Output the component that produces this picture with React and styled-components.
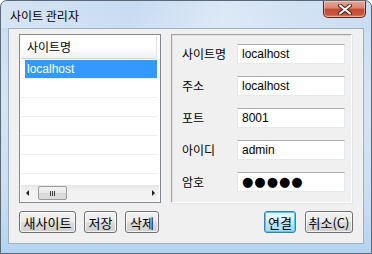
import React from 'react'
import styled, { createGlobalStyle, css } from 'styled-components'

const Global = createGlobalStyle`
  html, body { margin: 0; padding: 0; background: #ffffff; }
  body {
    font-family: "Liberation Sans", "Noto Sans CJK KR", sans-serif;
    font-size: 12px;
    color: #000;
  }
`

const Window = styled.div`
  width: 372px;
  height: 254px;
  box-sizing: border-box;
  border: 1px solid #5b6878;
  border-radius: 7px 7px 0 0;
  background: linear-gradient(180deg, #c7dbf1 0%, #d6e5f5 40%, #c9ddf2 80%, #b4d3f0 100%);
  display: flex;
  flex-direction: column;
  padding: 0 7px 9px 7px;
  overflow: hidden;
`

const TitleBar = styled.div`
  height: 27px;
  display: flex;
  align-items: flex-start;
  justify-content: space-between;
  background: linear-gradient(100deg, rgba(255,255,255,0.25) 0%, rgba(255,255,255,0) 35%, rgba(255,255,255,0.35) 60%, rgba(255,255,255,0) 100%);
  margin: 0 -7px;
  padding: 0 5px 0 9px;
`

const Title = styled.div`
  font-family: "Noto Sans CJK KR", sans-serif;
  font-size: 12px;
  line-height: 14px;
  margin-top: 8px;
  color: #000;
`

const CloseButton = styled.div`
  width: 43px;
  height: 17px;
  box-sizing: border-box;
  border: 1px solid #6b2214;
  border-top: none;
  border-radius: 0 0 5px 5px;
  background: linear-gradient(180deg, #e6a898 0%, #d98470 45%, #c14a32 50%, #c9563c 85%, #e08f6c 100%);
  display: flex;
  align-items: center;
  justify-content: center;
  box-shadow: inset 0 0 0 1px rgba(255,255,255,0.35);
`

const Content = styled.div`
  flex: 1;
  background: #f0f0f0;
  border: 1px solid #9fb0c3;
  box-sizing: border-box;
  padding: 5px 10px 0 10px;
  display: flex;
  flex-direction: column;
`

const MainRow = styled.div`
  display: flex;
  gap: 10px;
  height: 169px;
`

const ListBox = styled.div`
  width: 142px;
  box-sizing: border-box;
  border: 1px solid #828790;
  background: #fff;
  display: flex;
  flex-direction: column;
  padding: 1px;
`

const ListHeader = styled.div`
  height: 23px;
  box-sizing: border-box;
  background: linear-gradient(180deg, #ffffff 0%, #ffffff 50%, #f1f2f4 100%);
  border-bottom: 1px solid #d5d5d5;
  border-right: 1px solid #e3e4e6;
  font-family: "Noto Sans CJK KR", sans-serif;
  line-height: 22px;
  padding-left: 6px;
  margin-right: 2px;
`

const ListRows = styled.div`
  flex: 1;
  overflow: hidden;
  padding-top: 1px;
`

const ListRow = styled.div`
  height: 19px;
  box-sizing: border-box;
  border-bottom: 1px solid #eeeeee;
  margin-right: 2px;
  ${p => p.$selected && css`
    & > span {
      background: #3399ff;
      color: #fff;
    }
  `}
`

const RowText = styled.span`
  display: block;
  height: 18px;
  line-height: 18px;
  margin-left: 4px;
  padding-left: 2px;
  font-size: 12px;
`

const HScroll = styled.div`
  height: 16px;
  display: flex;
  align-items: center;
  background: linear-gradient(180deg, #e6e6e6 0%, #f2f2f2 40%, #f2f2f2 100%);
  padding: 0 4px 0 5px;
`

const Arrow = styled.div`
  width: 0;
  height: 0;
  border-top: 3px solid transparent;
  border-bottom: 3px solid transparent;
  ${p => p.$dir === 'left'
    ? css`border-right: 3px solid #202020;`
    : css`border-left: 3px solid #202020;`}
`

const Thumb = styled.div`
  width: 29px;
  height: 14px;
  box-sizing: border-box;
  margin-left: 9px;
  border: 1px solid #9a9a9a;
  border-radius: 2px;
  background: linear-gradient(180deg, #f4f4f4 0%, #e6e6e6 50%, #d8d8d8 51%, #dcdcdc 100%);
  display: flex;
  align-items: center;
  justify-content: center;
  gap: 1px;
`

const Grip = styled.div`
  width: 1px;
  height: 5px;
  background: #404040;
`

const Spacer = styled.div`
  flex: 1;
`

const Panel = styled.div`
  width: 181px;
  box-sizing: border-box;
  border: 1px solid #fff;
  border-top-color: #a0a0a0;
  border-left-color: #a0a0a0;
  box-shadow: inset 1px 1px 0 #e3e3e3, 1px 1px 0 #e3e3e3;
  padding: 9px 6px 0 10px;
  display: flex;
  flex-direction: column;
  gap: 12px;
`

const Field = styled.div`
  display: flex;
  align-items: center;
  height: 20px;
`

const Label = styled.div`
  width: 55px;
  font-family: "Noto Sans CJK KR", sans-serif;
  font-size: 12px;
  line-height: 14px;
`

const Input = styled.div`
  width: 108px;
  height: 20px;
  box-sizing: border-box;
  border: 1px solid #e3e9ef;
  border-top-color: #abadb3;
  background: #fff;
  padding-left: 4px;
  line-height: 18px;
  font-size: 12px;
  overflow: hidden;
  ${p => p.$password && css`
    font-family: "DejaVu Sans", sans-serif;
    font-size: 13px;
    letter-spacing: 1px;
    line-height: 18px;
    padding-left: 4px;
  `}
`

const ButtonRow = styled.div`
  display: flex;
  align-items: center;
  margin-top: 8px;
  height: 22px;
`

const Button = styled.div`
  height: 22px;
  box-sizing: border-box;
  width: ${p => p.$w}px;
  margin-left: ${p => p.$ml || 0}px;
  border: 1px solid #707070;
  border-radius: 3px;
  background: linear-gradient(180deg, #f2f2f2 0%, #ebebeb 48%, #dddddd 52%, #cfcfcf 100%);
  box-shadow: inset 0 0 0 1px rgba(255,255,255,0.7);
  display: flex;
  align-items: center;
  justify-content: center;
  font-family: "Noto Sans CJK KR", sans-serif;
  font-size: 13px;
  white-space: nowrap;
  ${p => p.$default && css`
    border-color: #3c7fb1;
    background: linear-gradient(180deg, #eaf6fd 0%, #d9f0fc 48%, #bee6fd 52%, #a7d9f5 100%);
    box-shadow: inset 0 0 0 1px #48d0f9;
  `}
`

const Sites = ['localhost', '', '', '', '', '']

export default function App() {
  return (
    <>
      <Global />
      <Window>
        <TitleBar>
          <Title>사이트 관리자</Title>
          <CloseButton>
            <svg width="14" height="11" viewBox="0 0 14 11">
              <path d="M2 1.5 L12 9.5 M12 1.5 L2 9.5" stroke="#4a1a10" strokeWidth="4" strokeLinecap="round" />
              <path d="M2 1.5 L12 9.5 M12 1.5 L2 9.5" stroke="#ffffff" strokeWidth="2.2" strokeLinecap="round" />
            </svg>
          </CloseButton>
        </TitleBar>
        <Content>
          <MainRow>
            <ListBox>
              <ListHeader>사이트명</ListHeader>
              <ListRows>
                {Sites.map((s, i) => (
                  <ListRow key={i} $selected={i === 0}>
                    <RowText>{s}</RowText>
                  </ListRow>
                ))}
              </ListRows>
              <HScroll>
                <Arrow $dir="left" />
                <Thumb>
                  <Grip /><Grip /><Grip />
                </Thumb>
                <Spacer />
                <Arrow $dir="right" />
              </HScroll>
            </ListBox>
            <Panel>
              <Field><Label>사이트명</Label><Input>localhost</Input></Field>
              <Field><Label>주소</Label><Input>localhost</Input></Field>
              <Field><Label>포트</Label><Input>8001</Input></Field>
              <Field><Label>아이디</Label><Input>admin</Input></Field>
              <Field><Label>암호</Label><Input $password>●●●●●</Input></Field>
            </Panel>
          </MainRow>
          <ButtonRow>
            <Button $w={57}>새사이트</Button>
            <Button $w={33} $ml={8}>저장</Button>
            <Button $w={34} $ml={8}>삭제</Button>
            <Spacer />
            <Button $w={32} $default>연결</Button>
            <Button $w={48} $ml={9}>취소(C)</Button>
          </ButtonRow>
        </Content>
      </Window>
    </>
  )
}
